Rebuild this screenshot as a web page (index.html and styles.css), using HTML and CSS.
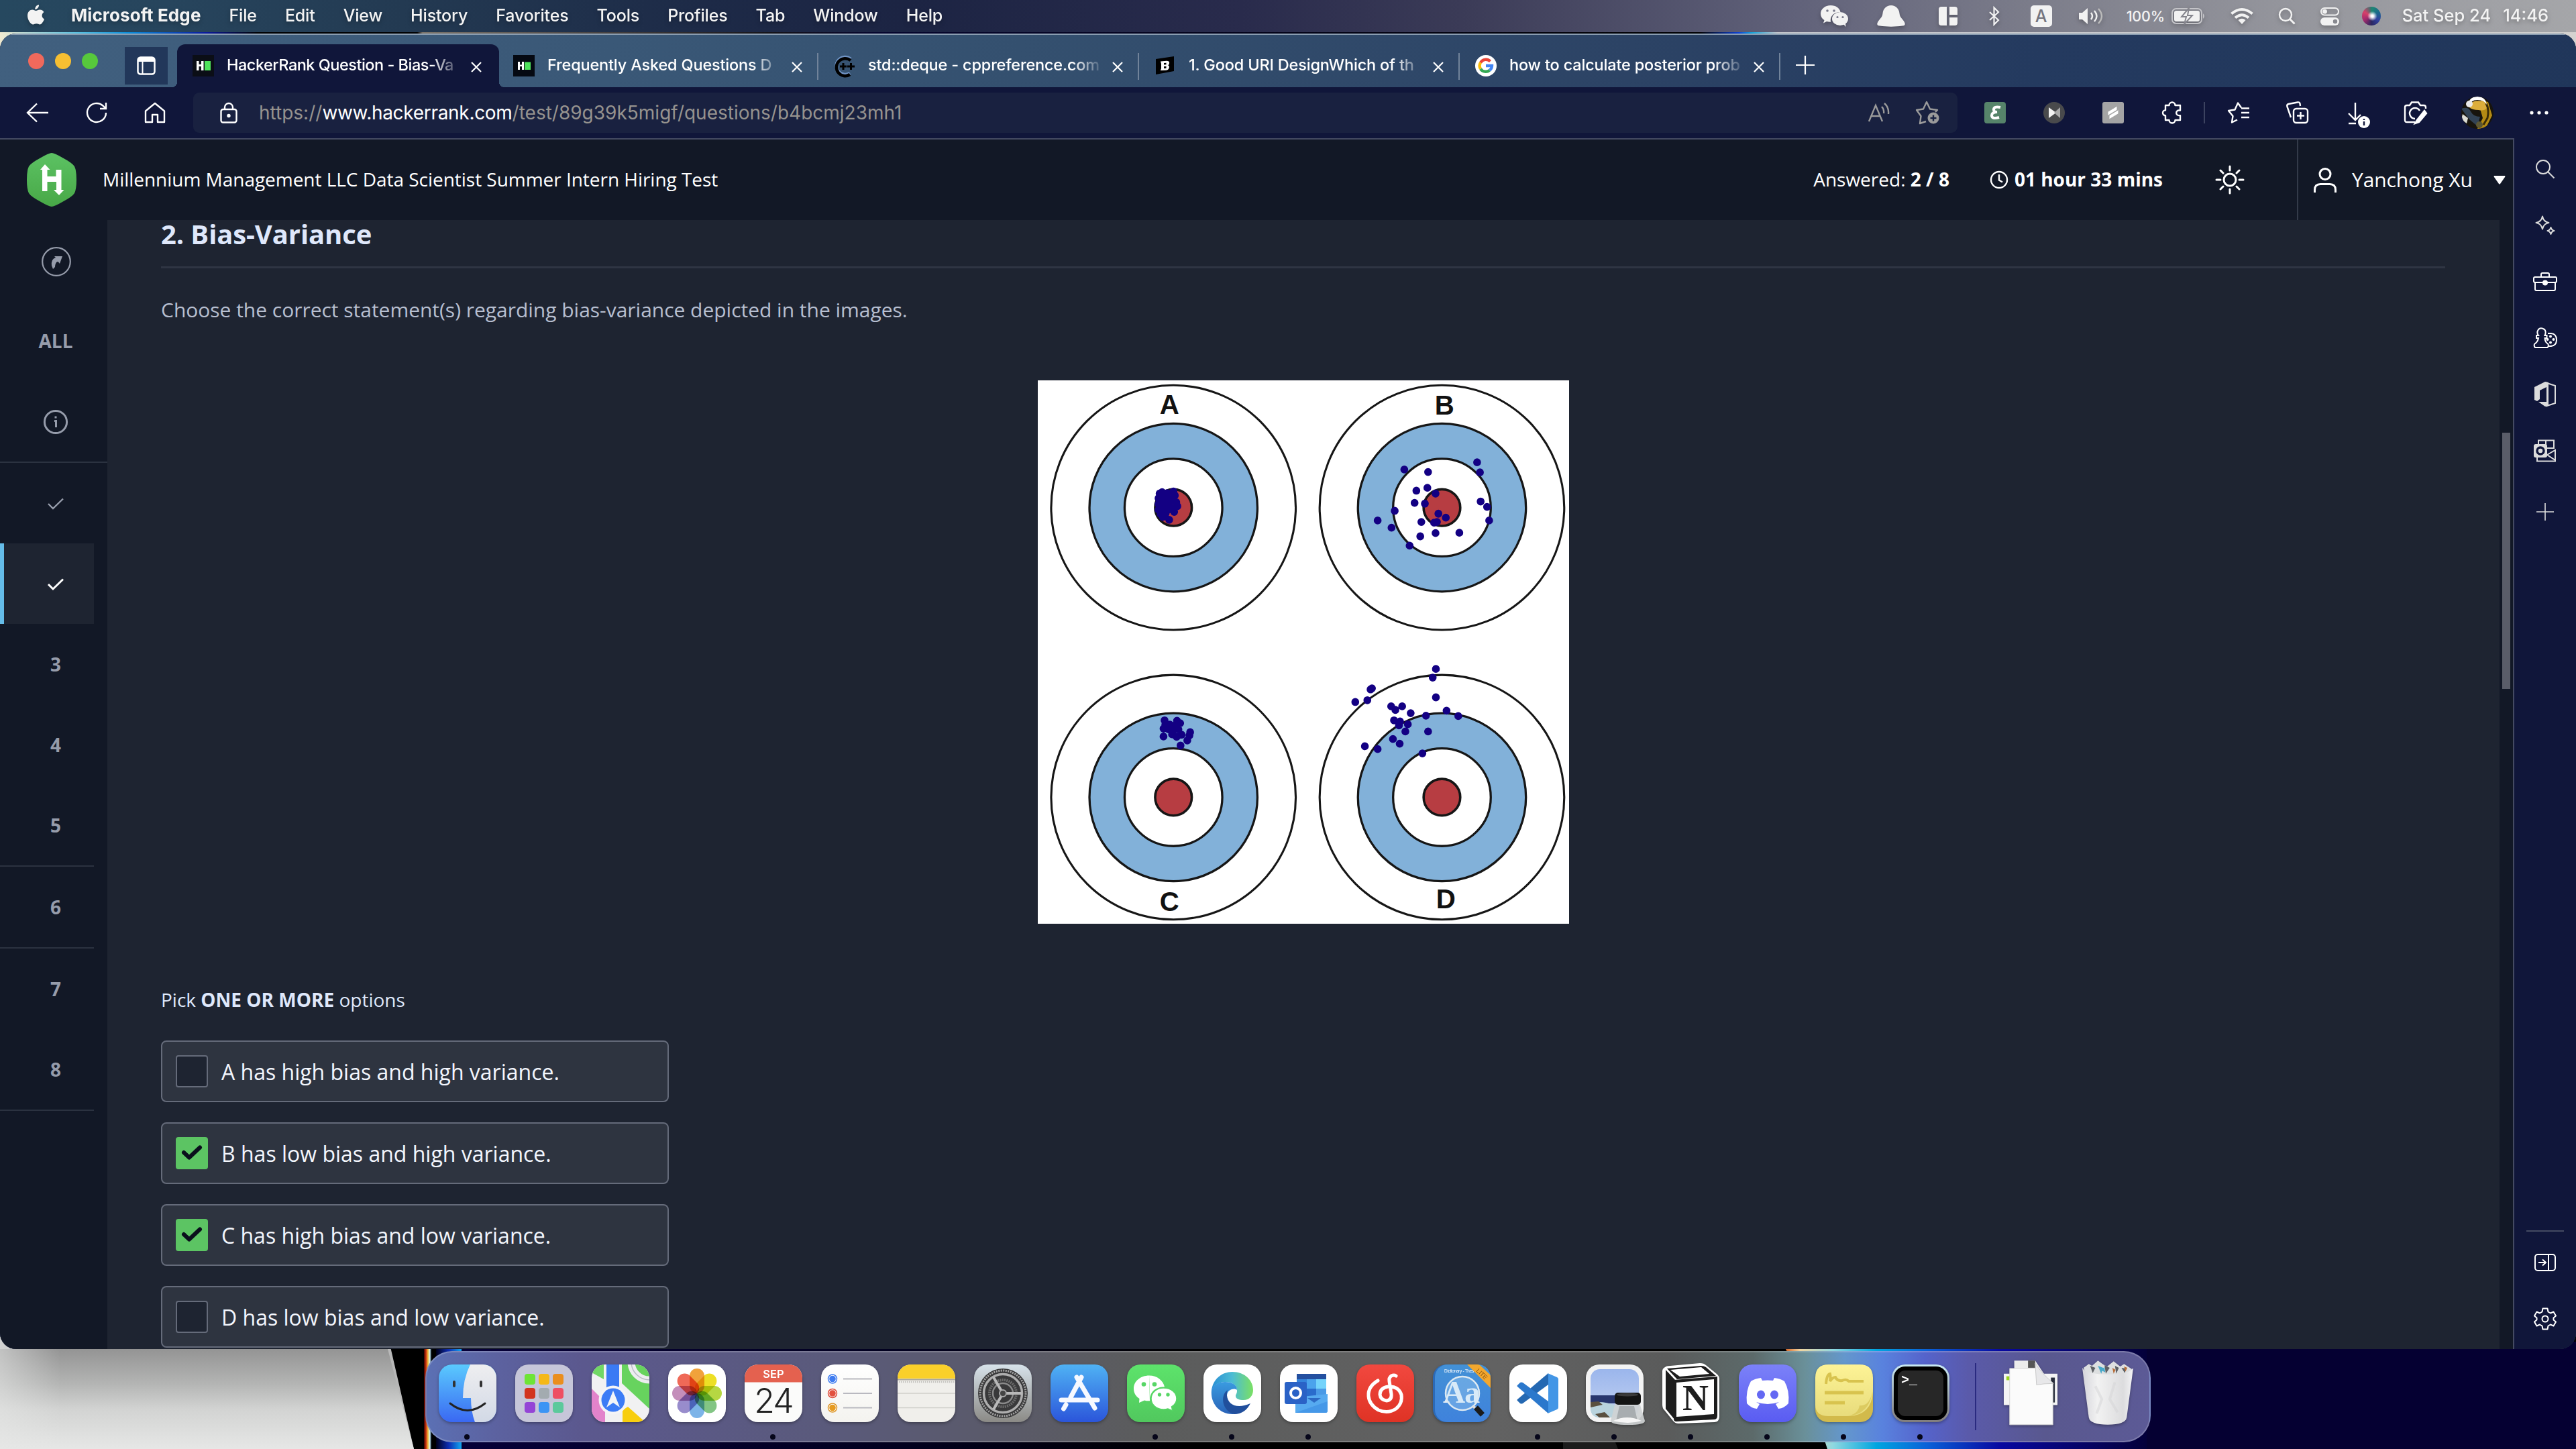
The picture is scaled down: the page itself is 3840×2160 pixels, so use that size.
FILE: index.html
```html
<!DOCTYPE html>
<html lang="en">
<head>
<meta charset="utf-8">
<title>HackerRank Question - Bias-Variance</title>
<link rel="stylesheet" href="styles.css">
</head>
<body>
<svg class="wallpaper" viewBox="0 0 3840 2160">
  <defs>
    <linearGradient id="paper" x1="0" y1="0" x2="0" y2="1"><stop offset="0" stop-color="#949494"/><stop offset=".35" stop-color="#b4b5b4"/><stop offset=".6" stop-color="#d2d3d2"/><stop offset="1" stop-color="#e6e7e6"/></linearGradient>
    <linearGradient id="paperEdge"><stop offset="0" stop-color="#e6e7e6" stop-opacity=".55"/><stop offset="1" stop-color="#e6e7e6" stop-opacity="0"/></linearGradient>
    <linearGradient id="spectrum"><stop offset="0" stop-color="#400"/><stop offset=".3" stop-color="#d33b10"/><stop offset=".55" stop-color="#f0c040"/><stop offset=".8" stop-color="#d8f4f4"/><stop offset="1" stop-color="#001830"/></linearGradient>
    <linearGradient id="blueBar"><stop offset="0" stop-color="#00001c"/><stop offset=".5" stop-color="#0c2cb4"/><stop offset="1" stop-color="#12a8f0"/></linearGradient>
    <linearGradient id="navyFade"><stop offset="0" stop-color="#060038"/><stop offset=".6" stop-color="#02011f"/><stop offset="1" stop-color="#000"/></linearGradient>
    <linearGradient id="glow"><stop offset="0" stop-color="#d14a08"/><stop offset=".05" stop-color="#f2d5a0"/><stop offset=".14" stop-color="#8fd8e0"/><stop offset=".26" stop-color="#00a5e0"/><stop offset=".4" stop-color="#0a60d8"/><stop offset=".6" stop-color="#0808a0"/><stop offset="1" stop-color="#04003a"/></linearGradient>
    <linearGradient id="topLine"><stop offset="0" stop-color="#f0ead0"/><stop offset=".03" stop-color="#5cc8e8"/><stop offset=".05" stop-color="#0890e0"/><stop offset=".08" stop-color="#0a18a0"/><stop offset=".1" stop-color="#000"/><stop offset=".162" stop-color="#000"/><stop offset=".164" stop-color="#80776c"/><stop offset=".3" stop-color="#151318"/><stop offset=".34" stop-color="#06052e"/><stop offset=".66" stop-color="#000"/><stop offset=".675" stop-color="#0a40d8"/><stop offset=".68" stop-color="#10a8e0"/><stop offset=".69" stop-color="#c8cbd0"/><stop offset="1" stop-color="#d4d2d0"/></linearGradient>
  </defs>
  <rect width="3840" height="2160" fill="#000"/>
  <rect width="3840" height="80" fill="url(#topLine)"/>
  <path d="M0 1960H571L617 2160H0Z" fill="#b8b8b8"/>
  <path d="M0 2011H578L617 2160H0Z" fill="url(#paper)"/>
  <rect y="1980" width="90" height="180" fill="url(#paperEdge)"/>
  <rect x="632" y="2000" width="11" height="160" fill="url(#spectrum)"/>
  <rect x="650" y="2000" width="38" height="160" fill="url(#blueBar)"/>
  <rect x="688" y="2000" width="1100" height="160" fill="url(#navyFade)"/>
  <path d="M2330 2140H2404L2412 2160H2330Z" fill="#1c1c1c"/>
  <rect x="3180" y="2000" width="660" height="160" fill="#050032"/>
  <path d="M2656 2000H3200V2160H2724Q2700 2080 2656 2000Z" fill="url(#glow)"/>
</svg>

<header class="menubar">
  <svg class="apple" viewBox="0 0 26 32"><path fill="currentColor" d="M18 0c.2 2-.6 3.800-1.700 5.100-1.100 1.300-2.700 2.100-4.100 2-.2-1.800.7-3.700 1.700-4.900C15 1 16.800.1 18 0zM25.400 10.900c-3 1.900-4.500 7.600.6 10.600-1 3-3.800 7.900-6.600 8-1.900 0-2.500-1.200-5-1.200s-3.300 1.200-5.100 1.200C5.700 29.500 1 22.600 1 16.500 1 10.700 4.700 7.700 8.300 7.600c2.100 0 3.800 1.400 5.300 1.400s3.500-1.600 6.300-1.400c1.800.1 4.100 1 5.500 3.300z"/></svg>
  <nav class="menus"><strong>Microsoft Edge</strong><span>File</span><span>Edit</span><span>View</span><span>History</span><span>Favorites</span><span>Tools</span><span>Profiles</span><span>Tab</span><span>Window</span><span>Help</span></nav>
  <div class="status">
    <svg class="s-wechat" viewBox="0 0 41 32"><path fill="#f2f2f2" d="M15 0C6.500 0 0 5.500 0 12.500c0 4 2 7.300 5.500 9.500L4 26.500l5-2.600c2 .6 4 .9 6 .8C13.500 16 20 10 29.500 10 28.500 4 22.500 0 15 0z"/><ellipse cx="29" cy="20" rx="12" ry="10" fill="#f2f2f2"/><path d="M34 28l3.500 4-.5-6z" fill="#f2f2f2"/><g fill="#77788a"><circle cx="10" cy="8" r="1.800"/><circle cx="20" cy="8" r="1.800"/><circle cx="25" cy="17.500" r="1.600"/><circle cx="33" cy="17.500" r="1.600"/></g></svg>
    <svg class="s-penguin" viewBox="0 0 42 32"><path fill="#f2f2f2" d="M21 0c7 0 12 5 12.500 12 .2 4 2.500 6.500 5 9.500 4 5 5 8.500-1 9-9 1.500-24 1.500-33 0-6-.5-5-4-1-9 2.500-3 4.800-5.500 5-9.500C9 5 14 0 21 0z"/></svg>
    <svg class="s-blocks" viewBox="0 0 28 28"><g fill="#f2f2f2"><path d="M4 0h8v28H4q-4 0-4-4V4q0-4 4-4z"/><path d="M16 0h8q4 0 4 4v8H16z"/><path d="M16 16h12v8q0 4-4 4h-8z"/></g></svg>
    <svg class="s-bt" viewBox="0 0 16 28"><path d="M1 8l13 12-6.500 6.500V1.500L14 8 1 20" fill="none" stroke="#f2f2f2" stroke-width="2.200"/></svg>
    <span class="input-badge">A</span>
    <svg class="s-vol" viewBox="0 0 38 26"><path d="M0 8h5l8-7v24l-8-7H0z" fill="#f2f2f2"/><path d="M18 8q4 5 0 10M23 5q7 8 0 16" fill="none" stroke="#f2f2f2" stroke-width="2.400"/><path d="M29 2q10 11 0 22" fill="none" stroke="#bbb" stroke-width="2.400"/></svg>
    <span class="pct">100%</span>
    <svg class="s-batt" viewBox="0 0 51 24"><rect x="1" y="1" width="44" height="22" rx="6" fill="none" stroke="#c4c4c8" stroke-width="2"/><rect x="4" y="4" width="38" height="16" rx="3" fill="#f2f2f2"/><path d="M47 8q4 4 0 8z" fill="#c4c4c8"/><path d="M26 0L15 13h7l-3 11 12-13h-7z" fill="#f2f2f2" stroke="#85858d" stroke-width="2"/></svg>
    <svg class="s-wifi" viewBox="0 0 34 24"><g fill="none" stroke="#f2f2f2" stroke-width="4"><path d="M1.500 8.500Q17-4.500 32.500 8.500M7 14.500q10-8.500 20 0"/></g><path d="M17 24l-5.500-6q5.500-4.500 11 0z" fill="#f2f2f2"/></svg>
    <svg class="s-search" viewBox="0 0 26 26"><circle cx="11" cy="11" r="9" fill="none" stroke="#f2f2f2" stroke-width="2.400"/><path d="M17.500 17.500l7 7" stroke="#f2f2f2" stroke-width="3"/></svg>
    <svg class="s-cc" viewBox="0 0 28 27"><rect x="1" y="1" width="26" height="10.500" rx="5.200" fill="none" stroke="#f2f2f2" stroke-width="2"/><circle cx="6.500" cy="6.200" r="3.400" fill="#f2f2f2"/><rect y="15" width="28" height="12" rx="6" fill="#f2f2f2"/><circle cx="22" cy="21" r="3.200" fill="#88898f"/></svg>
    <span class="siri"></span>
    <span class="date">Sat Sep 24</span><span class="time">14:46</span>
  </div>
</header>

<main class="window">
  <div class="tabstrip">
    <div class="lights"><i class="red"></i><i class="yellow"></i><i class="green"></i></div>
    <div class="tab-actions"><svg viewBox="0 0 28 28" width="28" height="28"><rect x="1.500" y="1.500" width="25" height="25" rx="4" fill="none" stroke="#fff" stroke-width="2.500"/><path d="M2 2h24v6H2z" fill="#fff"/><path d="M8.500 8v18" stroke="#fff" stroke-width="2"/></svg></div>
    <div class="tab active">
      <svg class="fav" viewBox="0 0 32 32"><rect width="32" height="32" fill="#0b0e16"/><path d="M6 9h3.500v5H13V9h3.500v14H13v-6H9.500v6H6z" fill="#fff"/><rect x="18" y="9" width="9" height="14" fill="#4fe35c"/></svg>
      <span class="tab-title">HackerRank Question - Bias-Va</span><svg class="x" viewBox="0 0 16 16"><path d="M1 1l14 14M15 1L1 15"/></svg>
    </div>
    <div class="tab">
      <svg class="fav" viewBox="0 0 32 32"><rect width="32" height="32" fill="#050912"/><path d="M7 10h3v4.500h3V10h3v12h-3v-5h-3v5H7z" fill="#fff"/><rect x="17" y="10.500" width="9" height="11.500" fill="#4fe35c"/></svg>
      <span class="tab-title">Frequently Asked Questions D</span><svg class="x" viewBox="0 0 16 16"><path d="M1 1l14 14M15 1L1 15"/></svg>
    </div>
    <div class="tab">
      <svg class="fav" viewBox="0 0 32 32"><path d="M25 6A13 13 0 1 0 24 27" fill="none" stroke="#6f93c4" stroke-width="5"/><path d="M25 8A13 13 0 1 0 24 29" fill="none" stroke="#000" stroke-width="4.500"/><path d="M9 17h10m-5-5v10M20 17h11m-5.500-5v10" stroke="#000" stroke-width="3"/></svg>
      <span class="tab-title">std::deque - cppreference.com</span><svg class="x" viewBox="0 0 16 16"><path d="M1 1l14 14M15 1L1 15"/></svg>
    </div>
    <div class="tab">
      <svg class="fav" viewBox="0 0 32 32"><path d="M2 6l27-4v22L2 29z" fill="#000"/><path fill-rule="evenodd" d="M9 9.500l9-.8q5 0 4 4-.5 2-2 2.500 2.500.8 1.800 3.800-.8 3.500-5 3.800L9 23l1-3V13zM14 12v2.500l3.500-.3v-2.400zm0 5v3l3.500-.3V17z" fill="#fff"/></svg>
      <span class="tab-title">1. Good URI DesignWhich of th</span><svg class="x" viewBox="0 0 16 16"><path d="M1 1l14 14M15 1L1 15"/></svg>
    </div>
    <div class="tab">
      <svg class="fav" viewBox="0 0 32 32"><circle cx="16" cy="16" r="16" fill="#fff"/><g fill="none" stroke-width="4.400"><path d="M22.500 9.500A9.200 9.200 0 0 0 8 11.300" stroke="#ea4335"/><path d="M8 11.300a9.200 9.200 0 0 0 0 9.400" stroke="#fbbc05"/><path d="M8 20.700a9.200 9.200 0 0 0 13.500 2" stroke="#34a853"/><path d="M21.500 22.700Q25 20 25 16h-9" stroke="#4285f4"/></g></svg>
      <span class="tab-title">how to calculate posterior prob</span><svg class="x" viewBox="0 0 16 16"><path d="M1 1l14 14M15 1L1 15"/></svg>
    </div>
    <svg class="newtab" viewBox="0 0 28 28"><path d="M14 0v28M0 14h28" stroke="#fff" stroke-width="2.200"/></svg>
  </div>

  <div class="toolbar">
    <div class="nav-icons">
      <svg width="34" height="30" viewBox="0 0 34 30"><path d="M33 15H2M16 1.500L2 15l14 13.500"/></svg>
      <svg width="34" height="34" viewBox="0 0 34 34"><path d="M31 17a14 14 0 1 1-4.500-10.300L31 11M31 2v9h-9"/></svg>
      <svg width="32" height="32" viewBox="0 0 32 32"><path d="M2 13.500L16 2l14 11.500V30H20V19h-8v11H2z" stroke-linejoin="round"/></svg>
    </div>
    <div class="address">
      <svg class="lock" width="26" height="31" viewBox="0 0 26 31"><rect x="1.500" y="10" width="23" height="19.500" rx="3"/><path d="M7 10V7a6 6 0 0 1 12 0v3"/><circle cx="13" cy="19.500" r="1.500" fill="#fff"/></svg>
      <span class="url">https://<b>www.hackerrank.com</b>/test/89g39k5migf/questions/b4bcmj23mh1</span>
      <svg class="read" width="32" height="30" viewBox="0 0 32 30"><path d="M1 28L11 4l10 24M5 20h12M20 6q4 4 3 10M24 1q7 6 6 16"/></svg>
      <svg width="36" height="36" viewBox="0 0 36 36"><path d="M16 31l-9 3 1.500-11L2 14l10-1.500L17 2l5 10.500L33 14l-3 3" stroke-linejoin="round"/><circle cx="27" cy="26" r="8.500" fill="#9b9b9b" stroke="none"/><path d="M27 21.500v9M22.500 26h9" stroke="#182242"/></svg>
    </div>
    <div class="cell"><svg width="32" height="32" viewBox="0 0 32 32"><rect width="32" height="32" rx="4" fill="#56846a" stroke="none"/><path d="M24 8q-10-2-10 3.500 0 3.500 5 3.500-8 .5-8 5 0 6 11 3" stroke="#fff" stroke-width="4"/></svg></div>
    <div class="cell"><svg width="32" height="32" viewBox="0 0 32 32"><circle cx="16" cy="16" r="16" fill="#494a4c" stroke="none"/><path d="M8 8l11 8-11 8z" fill="#f4f4f4" stroke="none"/><path d="M25 8l-9 8 9 8z" fill="#aaa" stroke="none"/></svg></div>
    <div class="cell"><svg width="32" height="32" viewBox="0 0 32 32"><rect width="32" height="32" rx="3" fill="#a4a4a4" stroke="none"/><path d="M8 14.500L22 6v6L8 20.500zM10 26l14-8.500v-6L10 20z" fill="#fff" stroke="#a4a4a4" stroke-width="1"/></svg></div>
    <div class="cell"><svg width="30" height="32" viewBox="0 0 30 32"><path d="M5 5h5.500a4.500 4.500 0 0 1 9 0H27v7.500h-2a3.800 3.800 0 0 0 0 7.600h2V27h-7.500a4.500 4.500 0 0 1-9 0H5v-6.800a4 4 0 0 1 0-8z" stroke-linejoin="round"/></svg></div>
    <i class="tb-sep"></i>
    <div class="cell"><svg width="34" height="32" viewBox="0 0 34 32"><path d="M21 8.500L16 1.500l-4.500 10L2 13l6.500 8L7 30.500l8-4M21 9.500h12M21 16h12M21 23h12" stroke-linejoin="round"/></svg></div>
    <div class="cell"><svg width="34" height="34" viewBox="0 0 34 34"><rect x="11" y="11" width="21" height="21" rx="4"/><path d="M21.500 16v11M16 21.500h11M7 24L1.500 8q-1-3 2-4L17 1.500q3-.5 3.500 2L21 7"/></svg></div>
    <div class="cell dl"><svg width="34" height="38" viewBox="0 0 34 38"><path d="M11 0v25M1 16l10 10 8-8M1 31h11"/><circle cx="24" cy="29" r="9" fill="#fff" stroke="none"/><path d="M24 24v2M24 28v6" stroke="#10163a"/></svg></div>
    <div class="cell"><svg width="36" height="34" viewBox="0 0 36 34"><path d="M17 31H5q-3 0-3-3V9q0-3 3-3h4l3-4.500h10L25 6h5q3 0 3 3v2M24 14a8 8 0 1 0-7 12" /><path d="M31 14L20 28l-3 5 6-2 11-13z" fill="#fff"/></svg></div>
    <div class="cell avatar"><svg width="48" height="48" viewBox="0 0 48 48"><defs><clipPath id="av"><circle cx="24" cy="24" r="24"/></clipPath></defs><g clip-path="url(#av)" stroke="none"><rect width="48" height="48" fill="#17140d"/><path d="M30 6l10 2 6 20-10 20H24l8-16-4-14z" fill="#b48a14"/><path d="M12 12q6-8 20-5 8 4 6 10-4 5-12 3-10 0-14-4z" fill="#dcae3c"/><path d="M37 10q5 10 2 22l-6 10" stroke="#3a2c08" stroke-width="3" fill="none"/><path d="M10 12Q12 0 24 0t14 12q-4-7-14-7t-12 9z" fill="#fff"/><circle cx="12" cy="11" r="5" fill="#e9e9e9"/><path d="M0 18q10-4 14 4t14 8l-4 14-12-10z" fill="#314254"/><path d="M2 26l8 6-2 8-8-6z" fill="#dcdcd4"/><circle cx="27" cy="42" r="5" fill="#5c5632"/></g></svg></div>
    <div class="cell"><svg width="28" height="8" viewBox="0 0 28 8"><g fill="#fff" stroke="none"><circle cx="3" cy="4" r="2.600"/><circle cx="14" cy="4" r="2.600"/><circle cx="25" cy="4" r="2.600"/></g></svg></div>
  </div>

  <div class="content">
    <div class="page">
      <div class="hr-header">
        <svg class="hr-logo" viewBox="0 0 74 80"><defs><linearGradient id="hrg" x1="0" y1="0" x2="0" y2="1"><stop offset="0" stop-color="#5cc263"/><stop offset="1" stop-color="#48a847"/></linearGradient></defs><path d="M37 0q4 0 16 7 15 8 18 13 3 6 3 20t-3 20q-3 5-18 13-12 7-16 7t-16-7Q6 65 3 60 0 54 0 40t3-20Q6 15 21 7 33 0 37 0z" fill="url(#hrg)"/><path fill="#fff" d="M27 17l7.500 8h-4v10h13V25h8v30h4L48 63l-8-8h4V43H30.500v14H23V25h-3z"/></svg>
        <span class="test-name">Millennium Management LLC Data Scientist Summer Intern Hiring Test</span>
        <span class="answered">Answered: <b>2 / 8</b></span>
        <svg class="clock" viewBox="0 0 28 28"><circle cx="14" cy="14" r="12" fill="none" stroke="#fff" stroke-width="2.400"/><path d="M14 6v8.500l5 3" fill="none" stroke="#fff" stroke-width="2.400"/></svg>
        <b class="left-time">01 hour 33 mins</b>
        <svg class="sun" viewBox="0 0 42 42"><circle cx="21" cy="21" r="9"/><path d="M21 1v6M21 35v6M1 21h6M35 21h6M7 7l4 4M31 31l4 4M35 7l-4 4M11 31l-4 4" stroke-linecap="round"/></svg>
        <div class="user">
          <svg width="34" height="37" viewBox="0 0 34 37"><circle cx="17" cy="9.500" r="8" fill="none" stroke="#fff" stroke-width="3"/><path d="M1.500 37v-4q0-8.500 8.500-8.500h14q8.500 0 8.500 8.500v4" fill="none" stroke="#fff" stroke-width="3"/></svg>
          <span>Yanchong Xu</span>
          <svg class="caret" width="18" height="13" viewBox="0 0 18 13"><path d="M1 0h16q1 1 0 2l-7 10q-1 1-2 0L1 2Q0 1 1 0z" fill="#fff"/></svg>
        </div>
      </div>
      <div class="hr-body">
        <aside class="qnav">
          <div class="row"><svg width="46" height="46" viewBox="0 0 46 46"><circle cx="24" cy="24" r="20.800" fill="none" stroke="#969cab" stroke-width="2.200"/><path d="M17 30q-1-10 6-12l-2-2h12l-4 11-2.500-3q-4 0-4.500 8l-3 3z" fill="#969cab"/></svg></div>
          <div class="row">ALL</div>
          <div class="row"><svg width="38" height="38" viewBox="0 0 38 38"><circle cx="19" cy="19" r="16.600" fill="none" stroke="#969cab" stroke-width="3"/><path d="M19 10.500v3M17 17.500h2.500V27" stroke="#969cab" stroke-width="3" fill="none"/></svg></div>
          <div class="qlist">
            <div class="row"><svg width="24" height="18" viewBox="0 0 24 18"><path d="M1 9l7 7L23 1.500" fill="none" stroke="#969cab" stroke-width="2.400"/></svg></div>
            <div class="row current"><svg width="24" height="18" viewBox="0 0 24 18"><path d="M1 9l7 7L23 1.500" fill="none" stroke="#fff" stroke-width="3"/></svg></div>
            <div class="row">3</div><div class="row">4</div><div class="row line">5</div><div class="row line">6</div><div class="row">7</div><div class="row line">8</div>
          </div>
        </aside>
        <section class="question">
          <h1>2. Bias-Variance</h1>
          <p class="prompt">Choose the correct statement(s) regarding bias-variance depicted in the images.</p>
          <svg class="targets" viewBox="32 32 1496 1512" preserveAspectRatio="none">
            <defs><g id="target" stroke="#161616" stroke-width="3.300"><circle r="182.300" fill="#fff" stroke-width="3.100"/><circle r="125.200" fill="#82b1d9"/><circle r="72.800" fill="#fff"/><circle r="27.300" fill="#b73d42" stroke-width="3.600"/></g></defs>
            <rect x="32" y="32" width="1496" height="1512" fill="#fff"/>
            <use href="#target" transform="translate(414 386) scale(1.889 1.867)"/>
            <use href="#target" transform="translate(1170 386) scale(1.889 1.867)"/>
            <use href="#target" transform="translate(414 1192) scale(1.889 1.867)"/>
            <use href="#target" transform="translate(1170 1192) scale(1.889 1.867)"/>
            <g fill="none" stroke="#130083" stroke-width="22" stroke-linecap="round">
              <path d="M375 347h0M382 343h0M397 346h0M414 341h0M418 352h0M372 360h0M390 358h0M405 362h0M372 376h0M388 374h0M403 372h0M422 371h0M372 392h0M386 389h0M401 386h0M416 388h0M425 382h0M378 404h0M392 402h0M384 412h0M402 420h0M416 398h0M398 393h0"/>
              <path d="M1269 260h0M1277 288h0M1064 280h0M1131 287h0M1129 331h0M1098 339h0M1152 347h0M1093 373h0M1122 375h0M1279 369h0M1297 384h0M1037 395h0M989 422h0M1028 442h0M1160 403h0M1181 414h0M1303 422h0M1112 426h0M1148 428h0M1156 426h0M1152 457h0M1219 456h0M1109 466h0M1079 492h0"/>
              <path d="M389 978h0M424 979h0M386 1001h0M404 990h0M418 992h0M433 986h0M400 1003h0M414 1005h0M428 1003h0M386 1023h0M410 1017h0M423 1024h0M437 1018h0M461 1011h0M459 1020h0M453 1034h0M434 1048h0M391 990h0"/>
              <path d="M1153 835h0M1144 859h0M1153 914h0M969 892h0M973 889h0M926 927h0M960 922h0M1027 939h0M1039 949h0M1058 939h0M1082 958h0M1125 965h0M1183 951h0M1216 966h0M1035 978h0M1052 981h0M1049 992h0M1074 989h0M1067 1009h0M1131 1009h0M1032 1030h0M1051 1043h0M953 1050h0M989 1058h0M1115 1070h0"/>
            </g>
            <g class="target-label"><text x="403" y="126">A</text><text x="1177" y="128">B</text><text x="403" y="1508">C</text><text x="1181" y="1502">D</text></g>
          </svg>
          <p class="pick">Pick <b>ONE OR MORE</b> options</p>
          <div class="options">
            <label class="option"><i class="box"></i>A has high bias and high variance.</label>
            <label class="option"><i class="box on"><svg width="30" height="22" viewBox="0 0 30 22"><path d="M3 11l8 7.500L27 3.500"/></svg></i>B has low bias and high variance.</label>
            <label class="option"><i class="box on"><svg width="30" height="22" viewBox="0 0 30 22"><path d="M3 11l8 7.500L27 3.500"/></svg></i>C has high bias and low variance.</label>
            <label class="option"><i class="box"></i>D has low bias and low variance.</label>
          </div>
        </section>
        <div class="scrollbar"><i></i></div>
      </div>
    </div>
    <aside class="edge-side">
      <div><svg width="28" height="28" viewBox="0 0 28 28"><circle cx="11" cy="11" r="10"/><path d="M18 18l9.500 9.500"/></svg></div>
      <div><svg width="30" height="30" viewBox="0 0 30 30"><path d="M11 1.500q1.500 8 9.500 9.500-8 1.500-9.500 9.500Q9.500 12.500 1.500 11 9.500 9.500 11 1.500zM23.500 18q1 4 5 5-4 1-5 5-1-4-5-5 4-1 5-5z" stroke-linejoin="round"/></svg></div>
      <div><svg class="bright" width="36" height="28" viewBox="0 0 36 28"><rect x="1" y="7" width="34" height="8" rx="2"/><path d="M3 15v10q0 2 2 2h26q2 0 2-2V15M12 7V3q0-2 2-2h8q2 0 2 2v4"/><circle cx="18" cy="15.500" r="3" fill="#fff"/></svg></div>
      <div><svg class="bright" width="36" height="32" viewBox="0 0 36 32"><path d="M3 30q-2-2-1-5 5-3 6-9H5v-4h3q-3-4-.5-8T15 2q3 1 3.500 4t-1 6h3v4h-3q0 6 5 9 1 4-1 5zM22 9h5q8 1 8 9.500T27 28h-4"/><g fill="#fff" stroke="none"><circle cx="26" cy="13.500" r="2"/><circle cx="26" cy="22.500" r="2"/><circle cx="21.500" cy="18" r="2"/><circle cx="30.500" cy="18" r="2"/></g></svg></div>
      <div><svg width="34" height="38" viewBox="0 0 34 38"><path d="M17 0L1 8v19l4 2 4-3V13l10-5v22H7l10 7 5-1V1z" fill="#dcdcdc" stroke="none"/><path d="M18 1.500L32 6v26l-14 4.500M20 4v30"/></svg></div>
      <div><svg width="34" height="34" viewBox="0 0 34 34"><path d="M7 7V1.500h23V14M18 1v13M7 13h23M5 27v5.500h27V16l-12 7 12 8" /><rect y="7" width="20" height="20" rx="3" fill="#dcdcdc" stroke="none"/><circle cx="10" cy="17" r="5" stroke="#10163a" stroke-width="3.500"/></svg></div>
      <div class="add"><svg width="26" height="26" viewBox="0 0 26 26"><path d="M13 0v26M0 13h26" stroke-width="1.600"/></svg></div>
      <i class="side-line"></i>
      <div><svg class="bright" width="32" height="26" viewBox="0 0 32 26"><rect x="1" y="1" width="30" height="24" rx="4"/><path d="M21 1v24M6 13h11M12 8.500l5 4.500-5 4.500"/></svg></div>
      <div><svg class="bright" width="34" height="34" viewBox="0 0 34 34"><path d="M13.500 1.500h7l1 5 3.500 2 4.500-2 3.500 6-3.500 3v3l3.500 3-3.500 6-4.500-2-3.500 2-1 5h-7l-1-5-3.500-2-4.500 2L1 21.500l3.500-3v-3L1 12.500l3.500-6 4.500 2 3.500-2z" stroke-linejoin="round"/><circle cx="17" cy="17" r="4.500"/></svg></div>
    </aside>
  </div>
</main>

<footer class="dock">
  <svg width="0" height="0" class="defs"><defs>
    <clipPath id="rr"><rect width="86" height="86" rx="20"/></clipPath>
    <linearGradient id="gFind" x1="0" y1="0" x2="0" y2="1"><stop offset="0" stop-color="#5acafe"/><stop offset="1" stop-color="#3a68f2"/></linearGradient>
    <linearGradient id="gFace" x1="0" y1="0" x2="0" y2="1"><stop offset="0" stop-color="#eeeef0"/><stop offset="1" stop-color="#d2d9e6"/></linearGradient>
    <linearGradient id="gPaper" x1="0" y1="0" x2="0" y2="1"><stop offset="0" stop-color="#fff"/><stop offset="1" stop-color="#f4f3ef"/></linearGradient>
    <linearGradient id="gSet" x1="0" y1="0" x2="0" y2="1"><stop offset="0" stop-color="#d7e2ea"/><stop offset="1" stop-color="#8b8a86"/></linearGradient>
    <linearGradient id="gStore" x1="0" y1="0" x2="0" y2="1"><stop offset="0" stop-color="#4fb2f4"/><stop offset="1" stop-color="#2b55da"/></linearGradient>
    <linearGradient id="gWe" x1="0" y1="0" x2="0" y2="1"><stop offset="0" stop-color="#5de36b"/><stop offset="1" stop-color="#51c85e"/></linearGradient>
    <linearGradient id="gEdge"><stop offset="0" stop-color="#2a8fd4"/><stop offset=".5" stop-color="#4cbcd4"/><stop offset="1" stop-color="#7be062"/></linearGradient>
    <linearGradient id="gEdge2" x1="0" y1="0" x2="0" y2="1"><stop offset="0" stop-color="#3a9be0"/><stop offset="1" stop-color="#2a63b8"/></linearGradient>
    <linearGradient id="gNet" x1="0" y1="0" x2="0" y2="1"><stop offset="0" stop-color="#f1483f"/><stop offset="1" stop-color="#df3325"/></linearGradient>
    <linearGradient id="gDict" x1="0" y1="0" x2="0" y2="1"><stop offset="0" stop-color="#4391d6"/><stop offset="1" stop-color="#3f82dc"/></linearGradient>
    <linearGradient id="gSky" x1="0" y1="0" x2="0" y2="1"><stop offset="0" stop-color="#9bb6ec"/><stop offset="1" stop-color="#c3d2f2"/></linearGradient>
    <linearGradient id="gDisc" x1="0" y1="0" x2="0" y2="1"><stop offset="0" stop-color="#7b81f8"/><stop offset="1" stop-color="#5a5cf2"/></linearGradient>
    <linearGradient id="gStick" x1="0" y1="0" x2="0" y2="1"><stop offset="0" stop-color="#fdf396"/><stop offset="1" stop-color="#e8dc7c"/></linearGradient>
    <linearGradient id="gTerm" x1="0" y1="0" x2="0" y2="1"><stop offset="0" stop-color="#c8e8f4"/><stop offset="1" stop-color="#807c7c"/></linearGradient>
    <linearGradient id="gTrash"><stop offset="0" stop-color="#d4d4da"/><stop offset=".3" stop-color="#f2f2f2"/><stop offset=".8" stop-color="#dcdcde"/><stop offset="1" stop-color="#f4f4f6"/></linearGradient>
  </defs></svg>
  <div class="app run"><svg viewBox="0 0 86 86"><g clip-path="url(#rr)"><rect width="86" height="86" fill="url(#gFind)"/><path d="M47 0Q36 22 36 50h12q0 20 6 36h32V0z" fill="url(#gFace)"/></g><path d="M23 26v6M63 26v6" stroke="#333" stroke-width="4" stroke-linecap="round"/><path d="M17 58q26 21 52 0" fill="none" stroke="#222" stroke-width="3" stroke-linecap="round"/></svg></div>
  <div class="app"><svg viewBox="0 0 86 86"><rect width="86" height="86" rx="20" fill="#c6c6d9"/><g><rect x="14" y="14" width="16" height="16" rx="4" fill="#6ee436"/><rect x="35" y="14" width="16" height="16" rx="4" fill="#f5b818"/><rect x="56" y="14" width="16" height="16" rx="4" fill="#ea8e1e"/><rect x="14" y="35" width="16" height="16" rx="4" fill="#d2341f"/><rect x="35" y="35" width="16" height="16" rx="4" fill="#a3abb0"/><rect x="56" y="35" width="16" height="16" rx="4" fill="#ee4f63"/><rect x="14" y="56" width="16" height="16" rx="4" fill="#9444d6"/><rect x="35" y="56" width="16" height="16" rx="4" fill="#3c94f4"/><rect x="56" y="56" width="16" height="16" rx="4" fill="#5cc99c"/></g></svg></div>
  <div class="app"><svg viewBox="0 0 86 86"><g clip-path="url(#rr)"><rect width="86" height="86" fill="#f1f1f2"/><path d="M0 0h18v22L0 12z" fill="#71d765"/><path d="M45 0h41v66L45 28z" fill="#67d35e"/><path d="M0 36l20 20v30H0z" fill="#e283cb"/><path d="M46 86V68l8-5 26 23z" fill="#f8ce0e"/><path d="M22 0h19v50H22z" fill="#3a7af4"/><circle cx="86" cy="-4" r="27" fill="none" stroke="#ecedf0" stroke-width="11"/><circle cx="86" cy="-4" r="27" fill="none" stroke="#b8bcc4" stroke-width="1.500"/></g><circle cx="32" cy="53" r="21.500" fill="#f4f4f6"/><circle cx="32" cy="53" r="17.500" fill="#3c7cf6"/><path d="M32 39l10 25-10-7-10 7z" fill="#f2f4f8"/></svg></div>
  <div class="app"><svg viewBox="0 0 86 86"><rect width="86" height="86" rx="20" fill="#fff"/><g class="petals"><rect x="32" y="6" width="22" height="37" rx="11" fill="#f09a2a"/><rect x="32" y="6" width="22" height="37" rx="11" fill="#ecdd12" transform="rotate(45 43 43)"/><rect x="32" y="6" width="22" height="37" rx="11" fill="#b0d432" transform="rotate(90 43 43)"/><rect x="32" y="6" width="22" height="37" rx="11" fill="#78c07a" transform="rotate(135 43 43)"/><rect x="32" y="6" width="22" height="37" rx="11" fill="#72aee6" transform="rotate(180 43 43)"/><rect x="32" y="6" width="22" height="37" rx="11" fill="#8f82c8" transform="rotate(225 43 43)"/><rect x="32" y="6" width="22" height="37" rx="11" fill="#bf84b4" transform="rotate(270 43 43)"/><rect x="32" y="6" width="22" height="37" rx="11" fill="#ee5c48" transform="rotate(315 43 43)"/></g></svg></div>
  <div class="app run"><svg viewBox="0 0 86 86"><g clip-path="url(#rr)"><rect width="86" height="86" fill="#fbfbfa"/><rect width="86" height="26.500" fill="#e4614f"/></g><text class="cal-m" x="43" y="20">SEP</text><text class="cal-d" x="43" y="72">24</text></svg></div>
  <div class="app"><svg viewBox="0 0 86 86"><rect width="86" height="86" rx="20" fill="url(#gPaper)"/><g stroke="#b9b9c0" stroke-width="1.800"><path d="M33 21.500h43M33 43h43M33 64.500h43"/></g><g stroke-width="1.500" fill="#fff"><circle cx="17" cy="21.500" r="6.500" stroke="#3f7cf0"/><circle cx="17" cy="43" r="6.500" stroke="#dd4b3a"/><circle cx="17" cy="64.500" r="6.500" stroke="#dc962a"/></g><circle cx="17" cy="21.500" r="4.800" fill="#3f7cf0"/><circle cx="17" cy="43" r="4.800" fill="#e2503e"/><circle cx="17" cy="64.500" r="4.800" fill="#e69a1f"/></svg></div>
  <div class="app"><svg viewBox="0 0 86 86"><g clip-path="url(#rr)"><rect width="86" height="86" fill="#f0efeb"/><rect width="86" height="21" fill="#fad02a"/><path d="M0 22.500h86" stroke="#a9a69a" stroke-width="2"/><path d="M2 26h84" stroke="#c4c3be" stroke-width="2.500" stroke-dasharray="1.500 1.500"/><path d="M0 43h86M0 64.500h86" stroke="#cfcfca" stroke-width="1.500"/></g></svg></div>
  <div class="app"><svg viewBox="0 0 86 86"><rect width="86" height="86" rx="20" fill="url(#gSet)"/><circle cx="43" cy="43" r="37" fill="#39393a"/><g fill="none"><circle cx="43" cy="43" r="34" stroke="#a5a5a5" stroke-width="3" stroke-dasharray="2 1.560"/><circle cx="43" cy="43" r="28.500" stroke="#aeaeae" stroke-width="3.500"/><circle cx="43" cy="43" r="20" stroke="#6c6c6c" stroke-width="4" stroke-dasharray="2 1.300"/><circle cx="43" cy="43" r="15" stroke="#8a8a8a" stroke-width="2.500"/></g><path d="M43 43h28M43 43L29 19M43 43L29 67" stroke="#b9b9b9" stroke-width="4"/><circle cx="43" cy="43" r="5" fill="#444" stroke="#aaa" stroke-width="2"/></svg></div>
  <div class="app"><svg viewBox="0 0 86 86"><rect width="86" height="86" rx="20" fill="url(#gStore)"/><path d="M16 53h54M46 19L30 49M23 60l-3.500 6M39 19l27 46" stroke="#f7f9ff" stroke-width="7" stroke-linecap="round"/></svg></div>
  <div class="app run"><svg viewBox="0 0 86 86"><rect width="86" height="86" rx="20" fill="url(#gWe)"/><path d="M33 16.500C20 16.500 10 25 10 36c0 6 3 11.500 8.500 15L18 57l8-3.500c2.500.7 5 1 8 .8" fill="#fff"/><path d="M33 16.500c12 0 21 7.500 23 17C43 33 33 41 34.500 54.500z" fill="#fff"/><path d="M54.500 35C44 35 36 42 36 51s8 16 18.500 16c2.500 0 4.500-.3 6.500-1l7 3-1.500-6c5-3 7.500-7 7.500-12 0-9-8-16-19.500-16z" fill="#fff" stroke="#57d665" stroke-width="1.500"/><g fill="#57d665"><circle cx="25" cy="29.500" r="3.300"/><circle cx="41" cy="29.500" r="3.300"/><circle cx="48.500" cy="45" r="2.700"/><circle cx="61" cy="45" r="2.700"/></g></svg></div>
  <div class="app run"><svg viewBox="0 0 86 86"><rect width="86" height="86" rx="20" fill="#fff"/><path d="M12 39C14 22 27 11 43 11c19 0 31 13 31 27 0 9-6 15-14 15-7 0-12-2-12-6 0-3 2-3 2-8 0-9-8-13-18-13-9 0-17 5-20 13z" fill="url(#gEdge)"/><path d="M12 38c3-8 11-12 20-12 10 0 18 4 18 12-3-3-14-2-15 8-1 15 13 22 32 14-5 9-14 14-24 14-20 0-33-17-31-36z" fill="url(#gEdge2)"/><path d="M36 38c-12 8-8 32 10 36 11 0 19-6 24-16-20 9-34 2-35-12 0-3 0-6 1-8z" fill="#214f9c"/></svg></div>
  <div class="app run"><svg viewBox="0 0 86 86"><rect width="86" height="86" rx="20" fill="#fff"/><rect x="25" y="14" width="44" height="57" rx="3" fill="#3584dc"/><rect x="25" y="14" width="44" height="8" fill="#2450a0"/><path d="M40 22h14v14H40z" fill="#4ba3ec"/><path d="M54 22h15v14H54z" fill="#74d3fb"/><path d="M40 36h14v14H40z" fill="#2a6ccc"/><path d="M54 36h15v14H54z" fill="#4a9ae6"/><path d="M23 49l48-5v25q0 3-3 3H23z" fill="#56aaf0"/><path d="M41 50h20l-10 7z" fill="#2d6ac4"/><path d="M23 72l48-17v14q0 3-3 3z" fill="#4598e8"/><rect x="7" y="26" width="33" height="33" rx="3" fill="#2a62c6"/><circle cx="23.500" cy="42.500" r="7.500" fill="none" stroke="#fff" stroke-width="4"/></svg></div>
  <div class="app"><svg viewBox="0 0 86 86"><rect width="86" height="86" rx="20" fill="url(#gNet)"/><path d="M59 17q-3-2-7 0-4 3-3 8l3 19q1 9-7 10-9-1-10-9 0-10 12-12 16-1 20 12 2 13-8 21-12 8-26 2-14-8-15-21-1-14 14-23" fill="none" stroke="#fff" stroke-width="5" stroke-linecap="round"/></svg></div>
  <div class="app"><svg viewBox="0 0 86 86"><rect width="86" height="86" rx="20" fill="#2b6ab8"/><rect x="3" width="83" height="86" rx="19" fill="url(#gDict)"/><text class="dict-top" x="17" y="11.500">Dictionary - Thes</text><g clip-path="url(#rr)"><path d="M51 0h18l17 16v19z" fill="#f3a72d"/></g><text class="lite" transform="translate(64 10) rotate(43)">LITE</text><text class="aa" x="15" y="57">Aa</text><circle cx="44" cy="43" r="25" fill="#bfe4fb" fill-opacity=".3" stroke="#dce9f2" stroke-width="2.500"/><path d="M60 62l3 3" stroke="#ddd" stroke-width="4"/><path d="M64 64l10 11" stroke="#1b1b1b" stroke-width="8"/></svg></div>
  <div class="app run"><svg viewBox="0 0 86 86"><rect width="86" height="86" rx="20" fill="#fff"/><path d="M58 13L12 52q-1 1 0 2l4 4q2 1 4 0l38-28z" fill="#2468b2"/><path d="M58 73L12 33q-1-1 0-2l4-4q2-1 4 0l38 28z" fill="#2b78cc"/><path d="M57 13l14 6q2 1 2 3v42q0 2-2 3l-14 6q1-1 1-3V16z" fill="#4396e6"/></svg></div>
  <div class="app run"><svg viewBox="0 0 86 86"><rect width="86" height="86" rx="20" fill="#f3f3f3"/><rect x="7" y="7" width="72" height="72" rx="14" fill="url(#gSky)"/><path d="M7 46h72v12H7z" fill="#28366e"/><path d="M7 57q20-3 36 4l6 18H21Q7 79 7 65z" fill="#b9d3dd"/><path d="M7 56l12-1 6 5-18 4zM14 74l14-3 8 8H20z" fill="#5a5040"/><path d="M44 57h36l8 27q0 6-25 6t-26-6z" fill="#cfd2d4" fill-opacity=".92"/><path d="M50 62h22l5 22H45z" fill="#8f9496" fill-opacity=".6"/><path d="M41 84q20-10 42 0-20 6-42 0z" fill="#f6f6f6"/><rect x="43" y="42" width="39" height="18" rx="5" fill="#141414"/><ellipse cx="62" cy="45" rx="16" ry="2.500" fill="#3b3b3b"/></svg></div>
  <div class="app run"><svg viewBox="0 0 86 86"><path d="M4 4Q6 2 12 2L56-2q6 0 9 3l16 13q4 3 4 8v56q0 7-7 8L24 88q-5 0-8-4L3 68Q0 65 0 60V10q0-4 4-6z" fill="#fff"/><path d="M5 8l14 15v60L5 66z" fill="#1d1d1d"/><path d="M7 6l51-4q4 0 7 2l15 13-58 5z" fill="#1d1d1d"/><path d="M12 8l46-4 12 10-44 4z" fill="#fff"/><path d="M17 23l65-5v58q0 6-5 6l-56 3q-4 0-4-4z" fill="#1d1d1d"/><path d="M21 27l56-5v52l-56 4z" fill="#fff"/><text class="notion" x="49.500" y="68">N</text></svg></div>
  <div class="app run"><svg viewBox="0 0 86 86"><rect width="86" height="86" rx="20" fill="url(#gDisc)"/><path d="M33 20q-9 1-15 5Q10 39 12 58q6 7 15 8l4-7-5-3q17 6 34 0l-5 3 4 7q9-1 15-8 2-19-6-33-6-4-15-5l-2 4q-8-1-16 0z" fill="#fff"/><ellipse cx="33" cy="45" rx="6" ry="6.500" fill="#6468f3"/><ellipse cx="53" cy="45" rx="6" ry="6.500" fill="#6468f3"/></svg></div>
  <div class="app run"><svg viewBox="0 0 86 86"><rect y="6" width="86" height="80" rx="19" fill="#d2ba4b"/><path d="M0 20Q0 0 20 0h46q20 0 20 20v20Q84 76 50 77H20Q0 77 0 60z" fill="url(#gStick)"/><path d="M86 36Q82 76 46 77q18-2 20-16 16 2 20-25z" fill="#dccb60"/><path d="M16 29q1-14 6-15 1 4 0 11 4-6 8-6 3 6 10 5 6-3 10 1h22" fill="none" stroke="#d8c34e" stroke-width="4"/><path d="M14 42h58M14 57h30" stroke="#d8c34e" stroke-width="5"/></svg></div>
  <div class="app run"><svg viewBox="0 0 86 86"><rect width="86" height="86" rx="20" fill="url(#gTerm)"/><rect x="3" y="3" width="80" height="80" rx="17" fill="#000"/><rect x="9" y="9" width="68" height="68" rx="11" fill="#272727"/><text class="prompt-sign" x="14" y="29">&gt;_</text></svg></div>
  <i class="dock-sep"></i>
  <div class="app docs"><svg viewBox="0 0 84 98"><path d="M0 20h82v48H0z" fill="#f4f4f4"/><path d="M4 24h6v6H4z" fill="#9cd420"/><path d="M72 26h6v38h-6z" fill="#252a38"/><path d="M16 0h32l20 30v50H16z" fill="#ececec"/><path d="M37 0h11v11H37z" fill="#555"/><path d="M9 12h42l24 24v62H9z" fill="#fbfbfb" stroke="#d4d4d4"/><path d="M48 4q8 14 28 31-14 0-26 2z" fill="#e7e7e9" stroke="#c8c8c8"/></svg></div>
  <div class="app trash"><svg viewBox="0 0 78 100"><path d="M2 12l8-6 5 3 9-8 8 6 6 3 10-8 10 8 6-4 12 8-6 14H8z" fill="#dddfe0"/><path d="M0 12Q6 22 39 22T78 12L68 88q-2 11-29 11T10 88z" fill="url(#gTrash)"/><path d="M12 9l8 3-4 8zM34 8l8 4-6 9zM50 9l6 3-4 9zM60 12l7 1-2 7z" fill="#5d6064"/><path d="M24 9l8 3-3 9zM28 15l6-4 1 8z" fill="#47a9c9"/><path d="M46 12l5 3-3 6zM64 10l5 2-3 6z" fill="#b86f3c"/><path d="M20 40l10 20-8 22M50 34l-8 26 12 20" stroke="#d3d3d6" stroke-width="4" fill="none" opacity=".5"/></svg></div>
</footer>
</body>
</html>
```
FILE: styles.css
```css
* { box-sizing: border-box; }
body { margin: 0; width: 3840px; height: 2160px; overflow: hidden; background: #000; position: relative; font-family: "Open Sans", sans-serif; color: #fff; }
svg { display: block; flex: none; overflow: visible; }
i { display: block; font-style: normal; }
.wallpaper { position: absolute; left: 0; top: 0; width: 3840px; height: 2160px; z-index: -1; }

/* macOS menu bar */
.menubar { height: 48px; display: flex; align-items: center; padding: 0 41px 0 40px; color: #f3f3f3; font: 500 25px/48px Inter, sans-serif; background: linear-gradient(90deg, #26485f 0, #27455d 250px, #233a52 600px, #1d2a47 1050px, #1c2443 1350px, #292b4c 1850px, #3b3b57 2180px, #61627a 2680px, #7d7e8b 3050px, #94959c 3400px, #a5a6a9 3840px); }
.menubar svg, .menubar .menus, .date, .time { filter: drop-shadow(0 3px 3px rgba(0,0,0,.25)); }
.apple { width: 26px; height: 32px; margin-top: -3px; }
.menus { display: flex; gap: 42px; margin: -2px 0 0 40px; }
.menus strong { font-weight: 700; font-size: 26px; letter-spacing: .1px; }
.menus span { letter-spacing: -.15px; }
.status { display: flex; align-items: center; margin-left: auto; }
.s-wechat { width: 41px; height: 32px; margin-right: 43px; }
.s-penguin { width: 42px; height: 32px; margin-right: 50px; }
.s-blocks { width: 28px; height: 28px; margin-right: 47px; }
.s-bt { width: 16px; height: 28px; margin-right: 46px; }
.input-badge { width: 32px; height: 32px; border-radius: 5px; background: #f2f2f2; color: #74757f; font: 500 25px/32px Inter, sans-serif; text-align: center; margin-right: 40px; }
.s-vol { width: 38px; height: 26px; margin-right: 33px; }
.pct { font-size: 21.500px; letter-spacing: -.2px; margin-right: 10px; width: 57px; }
.s-batt { width: 51px; height: 24px; margin-right: 37px; }
.s-wifi { width: 34px; height: 24px; margin-right: 37px; }
.s-search { width: 26px; height: 26px; margin-right: 37px; }
.s-cc { width: 28px; height: 27px; margin-right: 34px; }
.siri { width: 28px; height: 28px; border-radius: 50%; margin-right: 32px; background: radial-gradient(circle at 55% 50%, #fff 0 8%, transparent 35%), conic-gradient(#1e8a70, #1a6a8c, #3040a0, #2c2860, #a02a6c, #d8406a, #2a7a70); }
.date, .time { font-size: 25.500px; margin-top: -3px; }
.time { margin-left: 18px; }

/* browser window */
.window { margin-top: 2px; height: 1961px; border-radius: 24px; overflow: hidden; display: flex; flex-direction: column; background: #10163a; box-shadow: inset 0 0 0 1px #3a4258; }
.tabstrip { height: 80px; flex: none; display: flex; align-items: flex-start; background: linear-gradient(100deg, #41607f 0, #3a5877 900px, #34506f 1500px, #2c4365 2400px, #243a5f 3000px, #20365a 3840px); border-top: 2px solid #8a9db1; }
.lights { display: flex; gap: 16px; margin: 27px 0 0 42px; }
.lights i { width: 24px; height: 24px; border-radius: 50%; }
.red { background: #f0695c; } .yellow { background: #f6bf32; } .green { background: #57c83c; }
.tab-actions { width: 64px; height: 56px; margin: 18px 14px 0 40px; background: #22375a; display: flex; align-items: center; justify-content: center; }
.tab { width: 478px; height: 64px; margin-top: 14px; padding: 0 24px 0 23px; display: flex; align-items: center; border-radius: 12px 12px 0 0; position: relative; }
.tab.active { background: #10163a; width: 480px; margin-right: -2px; padding-right: 26px; }
.tab.active::before, .tab.active::after { content: ""; position: absolute; bottom: 0; width: 8px; height: 8px; }
.tab.active::before { left: -8px; background: radial-gradient(circle at 0 0, transparent 8px, #10163a 8px); }
.tab.active::after { right: -8px; background: radial-gradient(circle at 100% 0, transparent 8px, #10163a 8px); }
.tab:not(.active)::after { content: ""; position: absolute; right: 0; top: 13px; width: 2px; height: 40px; background: #71839a; }
.fav { width: 32px; height: 32px; }
.tab-title { width: 352px; margin: -2px 12px 0 19px; white-space: nowrap; font: 500 23.500px/40px Inter, sans-serif; letter-spacing: -.18px; -webkit-mask-image: linear-gradient(90deg, #000 305px, transparent 352px); mask-image: linear-gradient(90deg, #000 305px, transparent 352px); }
.tab.active .tab-title { letter-spacing: -.5px; }
.x { width: 16px; height: 16px; margin-top: 3px; }
.x path { stroke: #fff; stroke-width: 2.200; }
.newtab { width: 28px; height: 28px; margin: 31px 0 0 23px; }
.toolbar { height: 76px; flex: none; display: flex; align-items: center; background: #10163a; }
.toolbar svg { fill: none; stroke: #fff; stroke-width: 2.400; }
.nav-icons { display: flex; align-items: center; width: 288px; padding-left: 39px; gap: 54px; }
.address { width: 2630px; height: 60px; margin-right: 12px; border-radius: 9px; background: #192140; display: flex; align-items: center; padding: 0 27px 0 40px; }
.url { margin: 0 auto 0 32px; font: 400 28px/60px Inter, sans-serif; letter-spacing: 0; color: #96938f; white-space: nowrap; }
.url b { font-weight: 400; color: #fff; letter-spacing: -.3px; }
.address svg:not(.lock) { stroke: #9b9b9b; }
.read { margin-right: 38px; }
.cell { width: 88px; flex: none; display: flex; justify-content: center; }
.tb-sep { width: 2px; height: 32px; background: #3c4360; margin: 0 6px 0 3px; }
.dl { padding: 8px 0 0 8px; }
.avatar { width: 96px; }

.content { flex: 1; display: flex; min-height: 0; }
.page { width: 3748px; display: flex; flex-direction: column; background: #121826; border: solid #444a62; border-width: 2px 2px 0 0; }
.hr-header { height: 120px; flex: none; display: flex; align-items: center; font-size: 28px; padding-left: 40px; white-space: nowrap; }
.hr-header span, .left-time { position: relative; top: -1px; }
.hr-logo { width: 74px; height: 80px; margin-right: 39px; }
.test-name { margin-right: auto; letter-spacing: -.03px; }
.answered { margin-right: 60px; }
.clock { width: 28px; height: 28px; margin-right: 9px; }
.left-time { margin-right: 79px; }
.sun { width: 42px; height: 42px; margin-right: 79px; fill: none; stroke: #fff; stroke-width: 3; }
.user { width: 322px; height: 120px; border-left: 2px solid #333a49; display: flex; align-items: center; padding-left: 23px; font-size: 30px; }
.user span { margin: 0 31px 0 23px; letter-spacing: -.1px; }
.hr-body { flex: 1; display: flex; min-height: 0; }
.qnav { width: 160px; flex: none; color: #969cab; font-weight: 700; font-size: 28px; }
.row { height: 120px; display: flex; align-items: center; justify-content: center; padding: 0 0 1px 6px; }
.row svg { margin-top: 3px; }
.qlist { border-top: 2px solid #2b3240; }
.qlist .row { width: 140px; padding-left: 26px; }
.qlist .row.line { height: 122px; border-bottom: 2px solid #2b3240; }
.qlist .row.current { background: #1e2431; border-left: 6px solid #65bce8; padding-left: 20px; }
.question { flex: 1; background: #1e2431; padding: 0 81px 0 80px; min-width: 0; overflow: hidden; }
h1 { margin: 0; height: 72px; border-bottom: 3px solid #2f3543; font-size: 40px; line-height: 42px; letter-spacing: -.1px; color: #dfe8fb; }
.prompt { margin: 42px 0 85px; font-size: 30px; line-height: 40px; letter-spacing: -.02px; color: #b7bfd0; }
.targets { width: 792px; height: 810px; margin: 0 auto; }
.target-label { font: 700 76px "Liberation Sans", sans-serif; text-anchor: middle; fill: #111; }
.pick { margin: 93px 0 41px; font-size: 28px; line-height: 40px; color: #dfe8fb; }
.options { display: flex; flex-direction: column; gap: 30px; }
.option { width: 757px; height: 92px; border: 2px solid #656b7a; border-radius: 8px; background: #2e3440; display: flex; align-items: center; padding-left: 20px; font-size: 32px; color: #f3f6fd; }
.box { width: 48px; height: 48px; margin-right: 20px; border: 2px solid #656b7a; border-radius: 4px; background: #1e2431; display: flex; align-items: center; justify-content: center; }
.box.on { background: #5cc463; border-color: #5cc463; }
.box svg { fill: none; stroke: #0a0f1c; stroke-width: 6; stroke-linecap: round; stroke-linejoin: round; margin-top: -2px; }
.scrollbar { width: 20px; flex: none; padding: 317px 0 0 4px; }
.scrollbar i { width: 12px; height: 382px; background: #5a5d69; }
.edge-side { flex: 1; background: #10163a; display: flex; flex-direction: column; padding: 4px 0 3px; }
.edge-side div { height: 84px; display: flex; align-items: center; justify-content: center; }
.edge-side svg { fill: none; stroke: #dcdcdc; stroke-width: 2; }
.edge-side svg.bright { stroke: #fff; }
.edge-side .add { margin-top: 7px; }
.side-line { width: 56px; height: 2px; background: #444a62; margin: auto auto 4px; }

/* dock */
.dock { width: 2572px; height: 136px; margin: 3px 0 0 634px; border: 2px solid rgba(255,255,255,.2); border-radius: 40px; display: flex; gap: 28px; padding: 18px 0 0 18px; background: linear-gradient(90deg, #5b70b4 0, #5c62a0 4%, #5b588e 9%, #5a5a7a 24%, #5a5a68 34%, #5b5c5c 42%, #626262 62%, #5a5b5b 72%, #5c6a6a 77%, #6a9099 80%, #6497cc 82.300%, #5982de 84.500%, #5563cb 87%, #5a5aaa 89.500%, #59588f 94%, #5c5a96 100%); }
.defs { position: absolute; }
.app { width: 86px; height: 86px; position: relative; flex: none; }
.app > svg { width: 86px; height: 86px; filter: drop-shadow(0 2px 2px rgba(0,0,0,.3)); }
.app.run::after { content: ""; position: absolute; left: 38px; top: 104px; width: 8px; height: 8px; border-radius: 50%; background: #06061a; }
.dock-sep { width: 2px; height: 100px; margin: -2px 13px 0 10px; background: #2a2a80; }
.app.docs > svg { width: 82px; height: 98px; margin-top: -7px; }
.app.trash > svg { width: 76px; height: 100px; margin: -8px 0 0 3px; }
.petals rect { mix-blend-mode: multiply; opacity: .92; }
.cal-m { font: 600 16.500px Inter, sans-serif; fill: #fff; text-anchor: middle; }
.cal-d { font: 300 50px Inter, sans-serif; fill: #222; text-anchor: middle; letter-spacing: -2px; }
.dict-top { font: 6.500px "Liberation Sans", sans-serif; fill: #fff; letter-spacing: -.3px; }
.lite { font: 9px "Liberation Sans", sans-serif; fill: #8a5410; }
.aa { font: 700 46px "Liberation Serif", serif; fill: #e3edf6; letter-spacing: -1px; }
.notion { font: 700 54px "Liberation Serif", serif; fill: #1d1d1d; text-anchor: middle; }
.prompt-sign { font: 700 20px "Liberation Mono", monospace; fill: #fff; }
```
